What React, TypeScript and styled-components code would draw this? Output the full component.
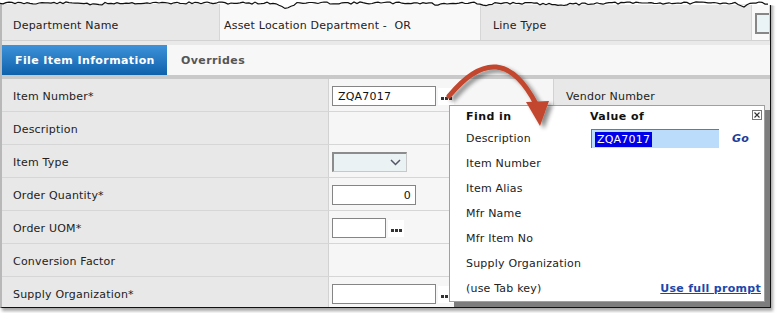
import styled, { createGlobalStyle } from "styled-components";

const GlobalStyle = createGlobalStyle`
  html, body {
    margin: 0;
    padding: 0;
    background: #fff;
  }
  body {
    font-family: "DejaVu Sans", Verdana, sans-serif;
    font-size: 11px;
    letter-spacing: 0.2px;
    color: #222;
  }
`;

type Field = {
  label: string;
  input?: { w: number; value?: string; align?: "left" | "right"; dots?: boolean };
  select?: boolean;
  side?: string;
};

const fields: Field[] = [
  { label: "Item Number*", input: { w: 104, value: "ZQA7017", dots: true }, side: "Vendor Number" },
  { label: "Description" },
  { label: "Item Type", select: true },
  { label: "Order Quantity*", input: { w: 84, value: "0", align: "right" } },
  { label: "Order UOM*", input: { w: 54, dots: true } },
  { label: "Conversion Factor" },
  { label: "Supply Organization*", input: { w: 104, dots: true } },
];

const findIn = [
  "Description",
  "Item Number",
  "Item Alias",
  "Mfr Name",
  "Mfr Item No",
  "Supply Organization",
];

// jagged "torn paper" line along the top of the screenshot
const tornPath = (() => {
  let s = 11;
  const rnd = () => {
    s = (s * 9301 + 49297) % 233280;
    return s / 233280;
  };
  const bumps = [
    [96, 2.2, 5],
    [286, 5, 5],
    [438, 2, 4],
    [486, 3.5, 4],
    [560, 1.5, 20],
    [744, 3.5, 3],
  ];
  const pts: string[] = [];
  for (let x = 0; x <= 770; x += 3) {
    let y = 3 + (rnd() - 0.5) * 2.2;
    for (const [bx, h, w] of bumps) {
      y += h * Math.exp(-((x - bx) * (x - bx)) / (2 * w * w));
    }
    pts.push(`${x},${y.toFixed(1)}`);
  }
  return pts;
})();

export default function App() {
  return (
    <Page>
      <GlobalStyle />
      <Frame>
        <HeaderRow>
          <HeadCell $tone="label" $pad={11}>Department Name</HeadCell>
          <HeadCell $tone="value" $pad={4}>Asset Location Department -&nbsp; OR</HeadCell>
          <HeadCell $tone="label" $pad={12}>Line Type</HeadCell>
          <HeadCell $tone="value" $pad={3}>
            <CheckBox />
          </HeadCell>
        </HeaderRow>
        <Gap />
        <TabBar>
          <Tab $active>File Item Information</Tab>
          <Tab>Overrides</Tab>
        </TabBar>
        <Band />
        <Form>
          {fields.map((f) => (
            <FormRow key={f.label}>
              <LabelCell>{f.label}</LabelCell>
              <ValueCell $span={!f.side}>
                {f.input && (
                  <TextInput $w={f.input.w} $align={f.input.align ?? "left"}>
                    {f.input.value}
                  </TextInput>
                )}
                {f.input?.dots && (
                  <Dots>
                    <i />
                    <i />
                    <i />
                  </Dots>
                )}
                {f.select && (
                  <Select>
                    <svg width="11" height="7" viewBox="0 0 11 7">
                      <polyline points="1,1 5.5,5.5 10,1" fill="none" stroke="#556" strokeWidth="1.5" />
                    </svg>
                  </Select>
                )}
              </ValueCell>
              {f.side && <SideCell>{f.side}</SideCell>}
            </FormRow>
          ))}
        </Form>

        <Popup>
          <CloseBox>
            <svg width="8" height="8" viewBox="0 0 8 8">
              <path d="M1.5 1.5 L6.5 6.5 M6.5 1.5 L1.5 6.5" stroke="#333" strokeWidth="1.1" />
            </svg>
          </CloseBox>
          <PopCell $col={1} $head>Find in</PopCell>
          <PopCell $col={2} $head>Value of</PopCell>
          {findIn.map((name, i) => (
            <PopRowGroup key={name}>
              <PopCell $col={1}>{name}</PopCell>
              <PopCell $col={2}>
                {i === 0 && (
                  <>
                    <SearchBox>
                      <Selected>ZQA7017</Selected>
                    </SearchBox>
                    <GoLink>Go</GoLink>
                  </>
                )}
              </PopCell>
            </PopRowGroup>
          ))}
          <PopCell $col={1}>(use Tab key)</PopCell>
          <PopCell $col={2} $right>
            <FullPrompt>Use full prompt</FullPrompt>
          </PopCell>
        </Popup>
      </Frame>

      <Overlay width="777" height="313" viewBox="0 0 777 313">
        <defs>
          <filter id="arrowShadow" x="-20%" y="-20%" width="140%" height="160%">
            <feGaussianBlur in="SourceAlpha" stdDeviation="2" />
            <feOffset dx="4" dy="3" />
            <feComponentTransfer>
              <feFuncA type="linear" slope="0.45" />
            </feComponentTransfer>
            <feMerge>
              <feMergeNode />
              <feMergeNode in="SourceGraphic" />
            </feMerge>
          </filter>
        </defs>
        <polygon points={`0,0 777,0 777,6 770,5 ${tornPath.join(" ")} 0,4`} fill="#fff" />
        <polyline points={tornPath.join(" ")} fill="none" stroke="#111" strokeWidth="1.2" />
        <g filter="url(#arrowShadow)">
          <path d="M449 96 Q500 34 536 104" fill="none" stroke="#c3462d" strokeWidth="5" strokeLinecap="round" />
          <polygon points="526,102 549,101 540,126" fill="#c3462d" />
        </g>
      </Overlay>
    </Page>
  );
}

const Page = styled.div`
  position: relative;
  width: 777px;
  height: 313px;
  overflow: hidden;
`;

const Frame = styled.div`
  position: relative;
  box-sizing: border-box;
  width: 771px;
  height: 308px;
  background: #f6f6f6;
  border-left: 2px solid #b8b8b8;
  border-right: 1px solid #111;
  border-bottom: 1px solid #111;
  box-shadow: 2px 3px 3px rgba(0, 0, 0, 0.35);
  overflow: hidden;
`;

const HeaderRow = styled.div`
  display: grid;
  grid-template-columns: 218px 261px 271px 1fr;
  height: 41px;
  border-bottom: 1px solid #d2d2d2;
  box-sizing: border-box;
`;

const HeadCell = styled.div<{ $tone: "label" | "value"; $pad: number }>`
  display: flex;
  align-items: center;
  padding: 11px 0 0 ${(p) => p.$pad}px;
  background: ${(p) => (p.$tone === "label" ? "#e8e8e8" : "#f9f9f9")};
  border-right: 1px solid #d6d6d6;
  white-space: nowrap;
  overflow: hidden;
`;

const CheckBox = styled.div`
  width: 16px;
  height: 17px;
  margin-bottom: 5px;
  background: #eaf4f7;
  border: 2px solid #878787;
  border-right: none;
  flex-shrink: 0;
`;

const Gap = styled.div`
  height: 4px;
  background: #e9e9e9;
`;

const TabBar = styled.div`
  display: flex;
  height: 30px;
  background: #f7f7f7;
`;

const Tab = styled.div<{ $active?: boolean }>`
  display: flex;
  align-items: center;
  padding: 0 ${(p) => (p.$active ? "0 0 13px" : "14px")};
  width: ${(p) => (p.$active ? "165px" : "auto")};
  box-sizing: border-box;
  white-space: nowrap;
  font-weight: bold;
  letter-spacing: 0.4px;
  color: ${(p) => (p.$active ? "#fff" : "#555")};
  background: ${(p) => (p.$active ? "linear-gradient(#3d92d9, #0f61ac)" : "transparent")};
`;

const Band = styled.div`
  height: 4px;
  background: #c9c9c9;
`;

const Form = styled.div`
  display: flex;
  flex-direction: column;
`;

const FormRow = styled.div`
  display: grid;
  grid-template-columns: 327px 224px 1fr;
  height: 33px;
  box-sizing: border-box;
  border-bottom: 1px solid #d6d6d6;
`;

const LabelCell = styled.div`
  display: flex;
  align-items: center;
  padding: 3px 0 0 11px;
  background: #e8e8e8;
  border-right: 1px solid #d2d2d2;
`;

const ValueCell = styled.div<{ $span: boolean }>`
  display: flex;
  align-items: center;
  gap: 2px;
  padding: 2px 0 0 3px;
  background: #f6f6f6;
  grid-column: ${(p) => (p.$span ? "2 / 4" : "auto")};
`;

const SideCell = styled.div`
  display: flex;
  align-items: center;
  padding: 3px 0 0 12px;
  background: #e8e8e8;
  border-left: 1px solid #d2d2d2;
`;

const TextInput = styled.div<{ $w: number; $align: "left" | "right" }>`
  box-sizing: border-box;
  width: ${(p) => p.$w}px;
  height: 20px;
  padding: 0 4px 0 5px;
  display: flex;
  align-items: center;
  justify-content: ${(p) => (p.$align === "right" ? "flex-end" : "flex-start")};
  background: #fff;
  border: 1px solid #858585;
  color: #111;
`;

const Dots = styled.div`
  display: flex;
  align-items: flex-end;
  gap: 1px;
  width: 16px;
  height: 17px;
  padding: 0 0 5px 3px;
  box-sizing: border-box;
  background: #fff;

  i {
    width: 3px;
    height: 3px;
    background: #333;
  }
`;

const Select = styled.div`
  box-sizing: border-box;
  width: 75px;
  height: 20px;
  display: flex;
  align-items: center;
  justify-content: flex-end;
  padding-right: 5px;
  background: #eaf2f4;
  border: 1px solid #c8c8c8;
  border-top: 2px solid #8c8c8c;
  border-left: 2px solid #8c8c8c;
`;

const Popup = styled.div`
  position: absolute;
  left: 447px;
  top: 105px;
  width: 316px;
  height: 197px;
  box-sizing: border-box;
  background: #fff;
  border: 1px solid #a0a0a0;
  box-shadow: 5px 5px 0 #7d7d7d;
  display: grid;
  grid-template-columns: 140px 1fr;
  grid-template-rows: 20px repeat(7, 25px);
`;

const PopRowGroup = styled.div`
  display: contents;
`;

const PopCell = styled.div<{ $col: 1 | 2; $head?: boolean; $right?: boolean }>`
  display: flex;
  align-items: center;
  justify-content: ${(p) => (p.$right ? "flex-end" : "flex-start")};
  padding-left: ${(p) => (p.$col === 1 ? "16px" : "0")};
  padding-right: 3px;
  font-weight: ${(p) => (p.$head ? "bold" : "normal")};
  letter-spacing: ${(p) => (p.$head ? "0.45px" : "0.2px")};
  color: ${(p) => (p.$head ? "#111" : "#222")};
`;

const CloseBox = styled.div`
  position: absolute;
  top: 4px;
  right: 2px;
  width: 10px;
  height: 10px;
  box-sizing: border-box;
  border: 1px solid #777;
  display: flex;
  align-items: center;
  justify-content: center;
  background: #fff;
`;

const SearchBox = styled.div`
  box-sizing: border-box;
  width: 128px;
  height: 19px;
  margin-left: 1px;
  display: flex;
  align-items: center;
  padding-left: 3px;
  background: #bcdcfb;
  border-top: 1px solid #777;
  border-left: 1px solid #777;
`;

const Selected = styled.span`
  background: #0000e8;
  color: #fff;
  padding: 1px 2px;
`;

const GoLink = styled.span`
  margin-left: 13px;
  font-weight: bold;
  font-style: italic;
  color: #1c3c9c;
`;

const FullPrompt = styled.span`
  font-weight: bold;
  letter-spacing: 0.3px;
  text-decoration: underline;
  color: #1d47aa;
`;

const Overlay = styled.svg`
  position: absolute;
  left: 0;
  top: 0;
  pointer-events: none;
`;
